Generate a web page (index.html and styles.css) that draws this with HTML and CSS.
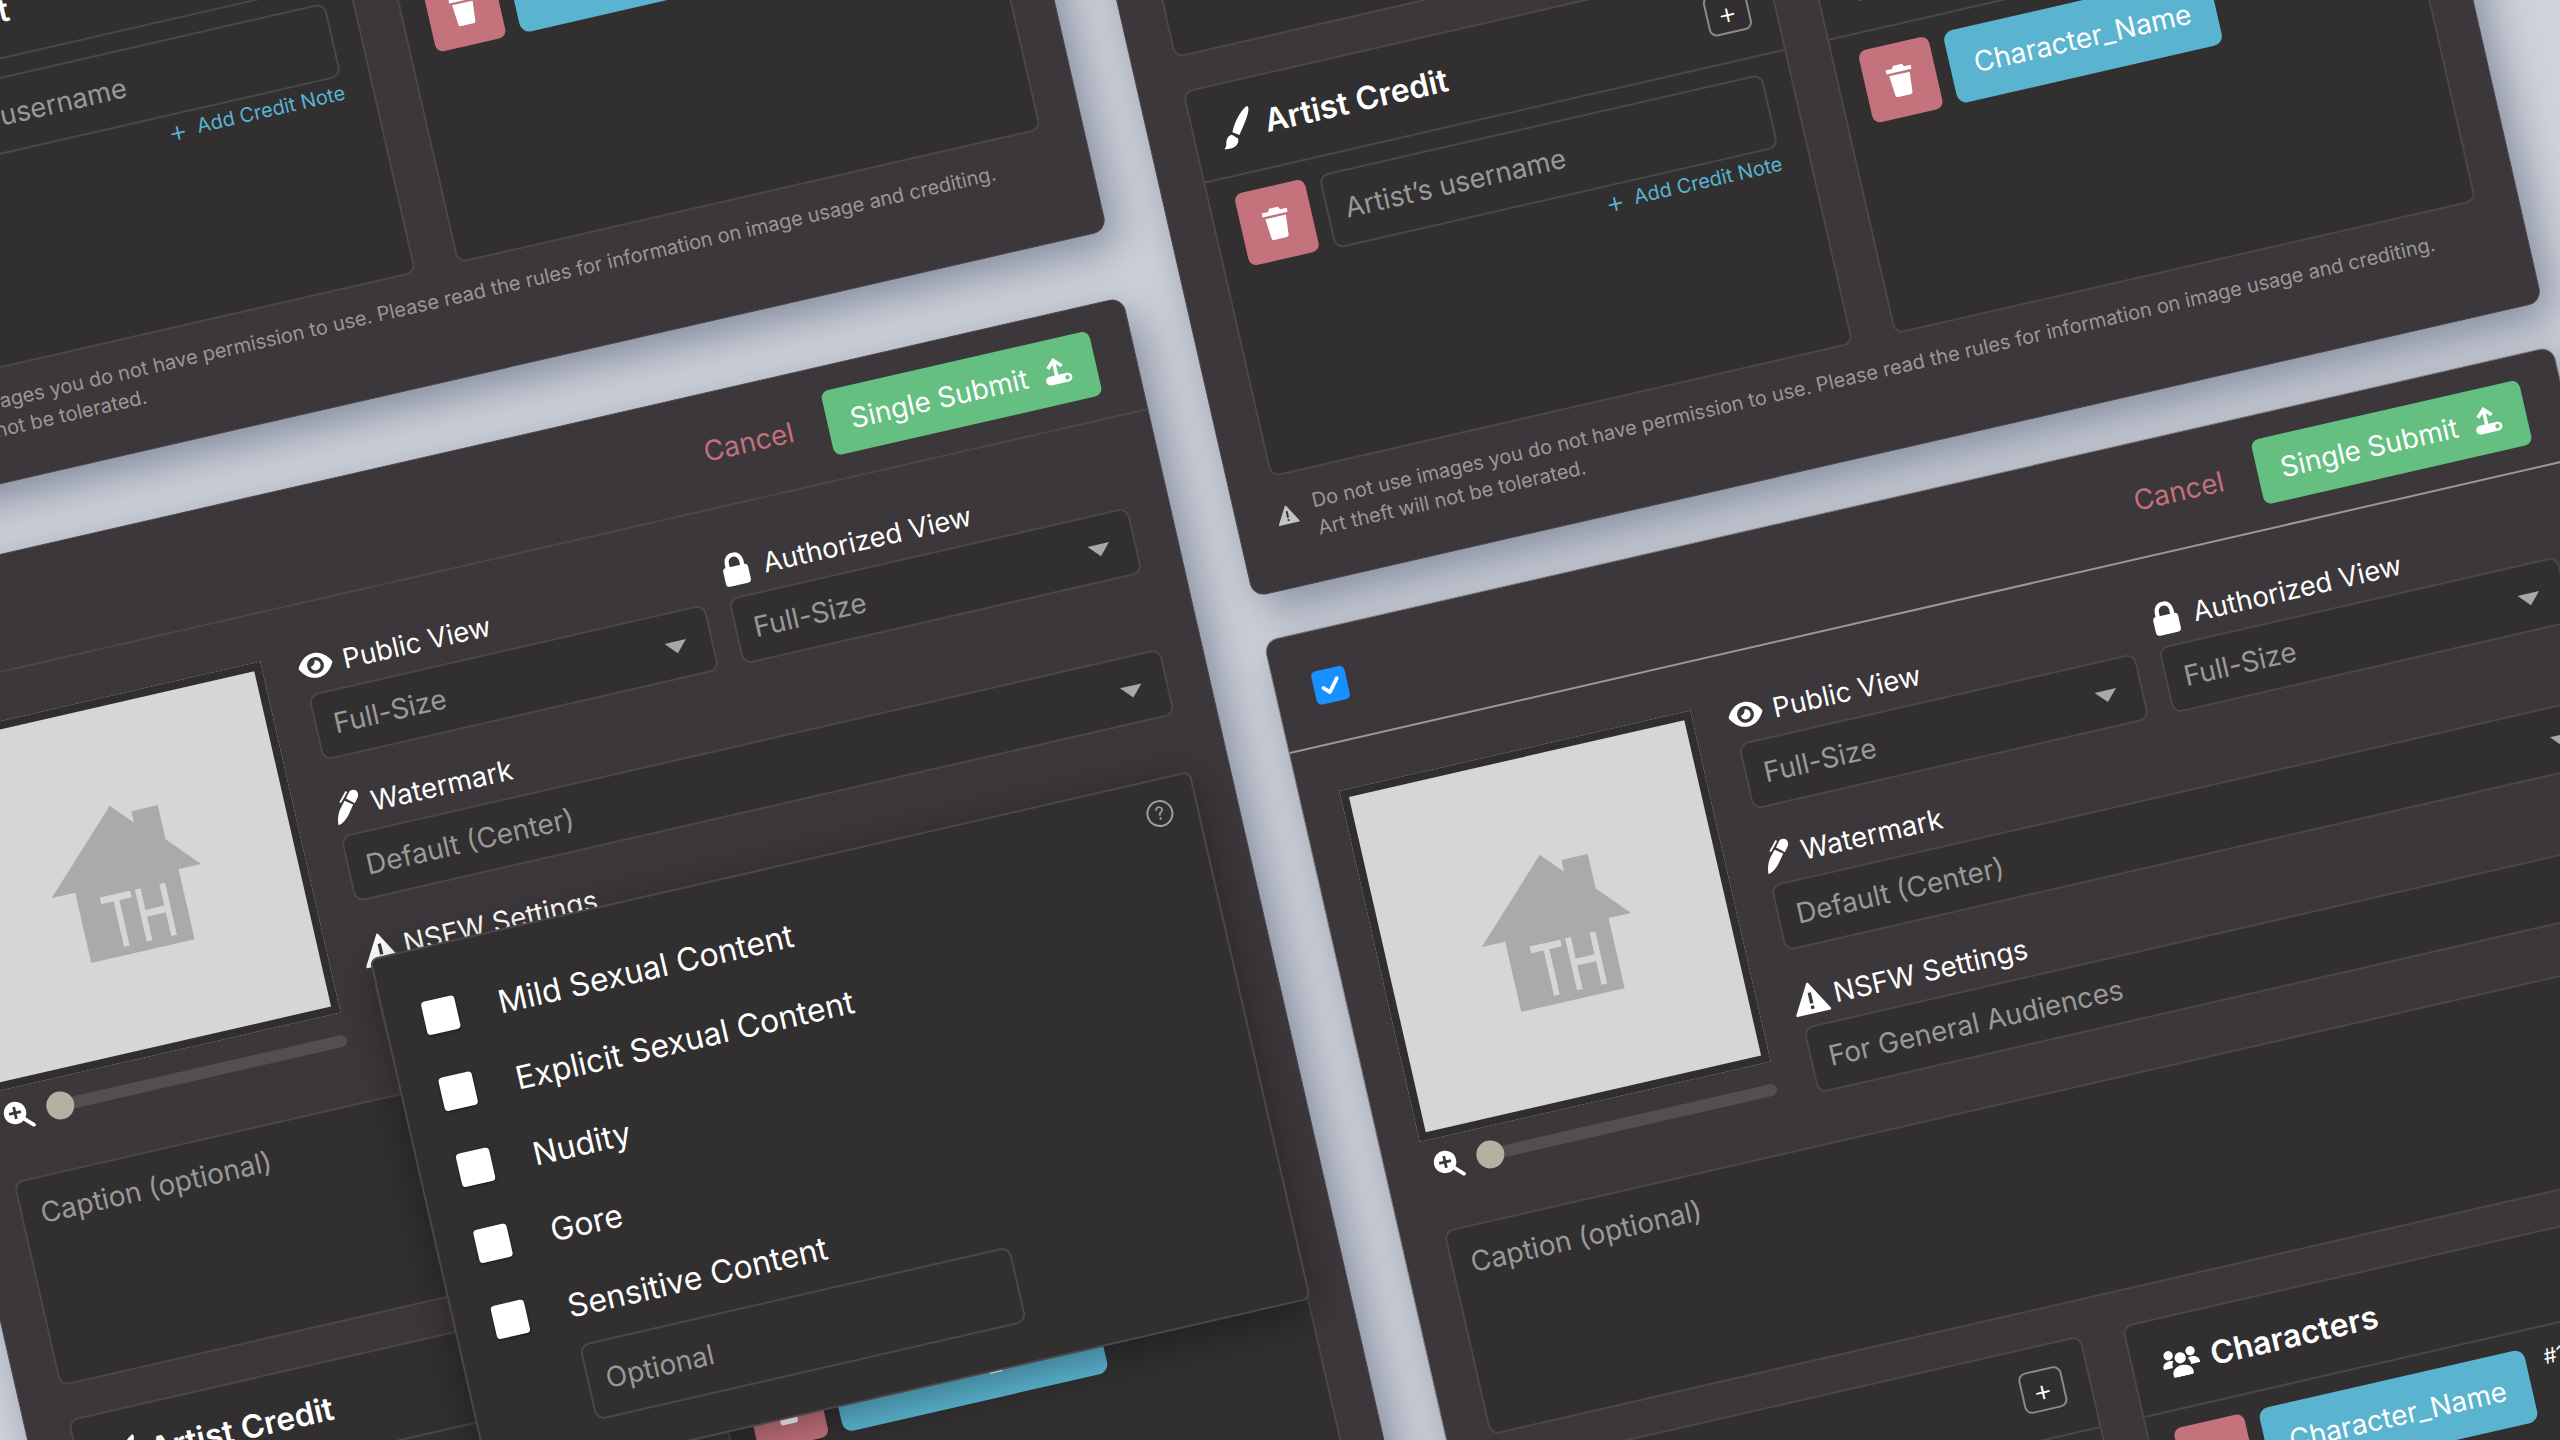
FILE: index.html
```html
<!DOCTYPE html>
<html lang="en">
<head>
<meta charset="utf-8">
<title>Submit</title>
<link rel="stylesheet" href="styles.css">
</head>
<body>
<svg class="defs" aria-hidden="true">
  <symbol id="i-eye" viewBox="0 0 32 24"><path fill="#fff" d="M16 1C8 1 3 7 .5 12 3 17 8 23 16 23s13-6 15.500-11C29 7 24 1 16 1z"/><circle cx="16" cy="12" r="7.500" fill="#3b373a"/><path fill="#fff" d="M16 7.500a4.500 4.500 0 1 1-4.500 4.500c2 .8 4.500-2 4.500-4.500z"/></symbol>
  <symbol id="i-lock" viewBox="0 0 28 32"><path fill="none" stroke="#fff" stroke-width="4" d="M7 15V9a7 7 0 0 1 14 0v6"/><rect x="2" y="13" width="24" height="18" rx="3.500" fill="#fff"/></symbol>
  <symbol id="i-pen" viewBox="0 0 32 36"><path fill="#fff" d="M2 35c0-5 2-12 6-17l6-7 8 6-6 8c-4 5-9 9-14 10z"/><path fill="#fff" d="M16 9l4-5c2-3 6-3 8-1s2 6 0 8l-4 5z"/><path fill="none" stroke="#fff" stroke-width="2" d="M18 2 9 12"/></symbol>
  <symbol id="i-warn" viewBox="0 0 32 30"><path fill="#fff" stroke="#fff" stroke-width="2" stroke-linejoin="round" d="M16 2 31 28H1z"/><rect x="14.500" y="10" width="3" height="10" fill="#3b373a"/><rect x="14.500" y="22" width="3" height="3" fill="#3b373a"/></symbol>
  <symbol id="i-zoom" viewBox="0 0 32 32"><circle cx="13" cy="13" r="12" fill="#fff"/><path stroke="#3b373a" stroke-width="3" d="M13 6.500v13M6.500 13h13"/><path stroke="#fff" stroke-width="4" stroke-linecap="round" d="M21 21l9 9"/></symbol>
  <symbol id="i-trash" viewBox="0 0 24 28"><path fill="#fff" d="M8 1h8l1.200 2.500H23V7H1V3.500h5.800zM3 9h18l-1.500 17a2 2 0 0 1-2 2h-11a2 2 0 0 1-2-2z"/></symbol>
  <symbol id="i-brush" viewBox="0 0 32 38"><path fill="#fff" d="M29 1c-6 3-14 12-18 21l6 4C22 19 30 9 31 3c0-2-1-3-2-2zM10 24c-4 0-6 3-7 7-.5 3-2 4-3 5 7 2 15 0 15-7z"/></symbol>
  <symbol id="i-users" viewBox="0 0 40 32"><circle cx="8" cy="7" r="5" fill="#fff"/><circle cx="32" cy="7" r="5" fill="#fff"/><circle cx="20" cy="12" r="6" fill="#fff"/><path fill="#fff" d="M0 20c0-5 4-7 8-7 2 0 3 .5 4 1-1.500 2-2 4-2 7H1a1 1 0 0 1-1-1zM40 20c0-5-4-7-8-7-2 0-3 .5-4 1 1.500 2 2 4 2 7h9a1 1 0 0 0 1-1zM9 29c0-6 5-9 11-9s11 3 11 9c0 2-1 3-3 3H12c-2 0-3-1-3-3z"/></symbol>
  <symbol id="i-upload" viewBox="0 0 36 36"><path fill="none" stroke="#fff" stroke-width="4" d="M17 24V6M9 13l8-8 8 8"/><rect x="4" y="22" width="30" height="10" rx="5" fill="#fff"/><circle cx="28.500" cy="27" r="2.500" fill="#64bf80"/></symbol>
  <symbol id="i-check" viewBox="0 0 24 24"><path fill="none" stroke="#fff" stroke-width="3.500" stroke-linecap="round" stroke-linejoin="round" d="M5 13l5 5 9-11"/></symbol>
</svg>

<main class="stage">
  <div class="desk">
    <section class="col col-left">
      <article class="card card-shift">
        <header class="card-head"><span class="checkbox"></span><span class="cancel">Cancel</span><button class="submit">Single Submit <svg class="ic-upload"><use href="#i-upload"/></svg></button></header>
        <div class="card-body">
          <div class="top">
            <div class="media"><div class="thumb"><svg class="house" viewBox="0 0 344 344"><path class="house-shape" d="M173 99l20 22V109l27 0v35l29 32h-23v72H120v-72H96z"/><text class="house-text" x="142" y="239" textLength="72" lengthAdjust="spacingAndGlyphs">TH</text></svg></div><div class="slider"><svg class="ic-zoom"><use href="#i-zoom"/></svg><span class="knob"></span><span class="track"></span></div></div>
            <div class="fields">
              <div class="field"><div class="label"><svg class="ic"><use href="#i-eye"/></svg>Public View</div><div class="select">Full-Size<i class="caret"></i></div></div>
              <div class="field"><div class="label"><svg class="ic"><use href="#i-lock"/></svg>Authorized View</div><div class="select">Full-Size<i class="caret"></i></div></div>
              <div class="field full"><div class="label"><svg class="ic"><use href="#i-pen"/></svg>Watermark</div><div class="select">Default (Center)<i class="caret"></i></div></div>
              <div class="field full"><div class="label"><svg class="ic"><use href="#i-warn"/></svg>NSFW Settings</div><div class="select">For General Audiences</div></div>
            </div>
          </div>
          <div class="caption">Caption (optional)</div>
          <div class="subs">
            <div class="sub"><div class="sub-head"><svg class="ic-brush"><use href="#i-brush"/></svg><span class="sub-title">Artist Credit</span><span class="plus">+</span></div><div class="sub-row"><span class="del"><svg class="ic-trash"><use href="#i-trash"/></svg></span><div class="credit"><div class="input">Artist’s username</div><div class="note"><span class="note-plus">+</span>Add Credit Note</div></div></div></div>
            <div class="sub"><div class="sub-head"><svg class="ic-users"><use href="#i-users"/></svg><span class="sub-title">Characters</span></div><div class="sub-row"><span class="del"><svg class="ic-trash"><use href="#i-trash"/></svg></span><span class="chip">Character_Name</span><span class="tag">#162</span></div></div>
          </div>
          <div class="warning"><svg class="ic-warn"><use href="#i-warn"/></svg><p>Do not use images you do not have permission to use. Please read the rules for information on image usage and crediting.<br>Art theft will not be tolerated.</p></div>
        </div>
      </article>

      <article class="card">
        <header class="card-head"><span class="checkbox"></span><span class="cancel">Cancel</span><button class="submit">Single Submit <svg class="ic-upload"><use href="#i-upload"/></svg></button></header>
        <div class="card-body">
          <div class="top">
            <div class="media"><div class="thumb"><svg class="house" viewBox="0 0 344 344"><path class="house-shape" d="M173 99l20 22V109l27 0v35l29 32h-23v72H120v-72H96z"/><text class="house-text" x="142" y="239" textLength="72" lengthAdjust="spacingAndGlyphs">TH</text></svg></div><div class="slider"><svg class="ic-zoom"><use href="#i-zoom"/></svg><span class="knob"></span><span class="track"></span></div></div>
            <div class="fields">
              <div class="field"><div class="label"><svg class="ic"><use href="#i-eye"/></svg>Public View</div><div class="select">Full-Size<i class="caret"></i></div></div>
              <div class="field"><div class="label"><svg class="ic"><use href="#i-lock"/></svg>Authorized View</div><div class="select">Full-Size<i class="caret"></i></div></div>
              <div class="field full"><div class="label"><svg class="ic"><use href="#i-pen"/></svg>Watermark</div><div class="select">Default (Center)<i class="caret"></i></div></div>
              <div class="field full"><div class="label"><svg class="ic"><use href="#i-warn"/></svg>NSFW Settings</div><div class="select">For General Audiences</div></div>
            </div>
          </div>
          <div class="caption">Caption (optional)</div>
          <div class="subs">
            <div class="sub"><div class="sub-head"><svg class="ic-brush"><use href="#i-brush"/></svg><span class="sub-title">Artist Credit</span><span class="plus">+</span></div><div class="sub-row"><span class="del"><svg class="ic-trash"><use href="#i-trash"/></svg></span><div class="credit"><div class="input">Artist’s username</div><div class="note"><span class="note-plus">+</span>Add Credit Note</div></div></div></div>
            <div class="sub"><div class="sub-head"><svg class="ic-users"><use href="#i-users"/></svg><span class="sub-title">Characters</span></div><div class="sub-row"><span class="del"><svg class="ic-trash"><use href="#i-trash"/></svg></span><span class="chip">Character_Name</span><span class="tag">#162</span></div></div>
          </div>
        </div>
        <div class="popup">
          <svg class="help" viewBox="0 0 28 28"><circle cx="14" cy="14" r="12.500"/><text x="14" y="20">?</text></svg>
          <label class="opt"><span class="box"></span>Mild Sexual Content</label>
          <label class="opt"><span class="box"></span>Explicit Sexual Content</label>
          <label class="opt"><span class="box"></span>Nudity</label>
          <label class="opt"><span class="box"></span>Gore</label>
          <label class="opt"><span class="box"></span>Sensitive Content</label>
          <div class="input popup-input">Optional</div>
        </div>
      </article>
    </section>

    <section class="col col-right">
      <article class="card">
        <header class="card-head"><span class="checkbox"></span><span class="cancel">Cancel</span><button class="submit">Single Submit <svg class="ic-upload"><use href="#i-upload"/></svg></button></header>
        <div class="card-body">
          <div class="top">
            <div class="media"><div class="thumb"><svg class="house" viewBox="0 0 344 344"><path class="house-shape" d="M173 99l20 22V109l27 0v35l29 32h-23v72H120v-72H96z"/><text class="house-text" x="142" y="239" textLength="72" lengthAdjust="spacingAndGlyphs">TH</text></svg></div><div class="slider"><svg class="ic-zoom"><use href="#i-zoom"/></svg><span class="knob"></span><span class="track"></span></div></div>
            <div class="fields">
              <div class="field"><div class="label"><svg class="ic"><use href="#i-eye"/></svg>Public View</div><div class="select">Full-Size<i class="caret"></i></div></div>
              <div class="field"><div class="label"><svg class="ic"><use href="#i-lock"/></svg>Authorized View</div><div class="select">Full-Size<i class="caret"></i></div></div>
              <div class="field full"><div class="label"><svg class="ic"><use href="#i-pen"/></svg>Watermark</div><div class="select">Default (Center)<i class="caret"></i></div></div>
              <div class="field full"><div class="label"><svg class="ic"><use href="#i-warn"/></svg>NSFW Settings</div><div class="select">For General Audiences</div></div>
            </div>
          </div>
          <div class="caption">Caption (optional)</div>
          <div class="subs">
            <div class="sub"><div class="sub-head"><svg class="ic-brush"><use href="#i-brush"/></svg><span class="sub-title">Artist Credit</span><span class="plus">+</span></div><div class="sub-row"><span class="del"><svg class="ic-trash"><use href="#i-trash"/></svg></span><div class="credit"><div class="input">Artist’s username</div><div class="note"><span class="note-plus">+</span>Add Credit Note</div></div></div></div>
            <div class="sub"><div class="sub-head"><svg class="ic-users"><use href="#i-users"/></svg><span class="sub-title">Characters</span></div><div class="sub-row"><span class="del"><svg class="ic-trash"><use href="#i-trash"/></svg></span><span class="chip">Character_Name</span><span class="tag">#162</span></div></div>
          </div>
          <div class="warning"><svg class="ic-warn"><use href="#i-warn"/></svg><p>Do not use images you do not have permission to use. Please read the rules for information on image usage and crediting.<br>Art theft will not be tolerated.</p></div>
        </div>
      </article>

      <article class="card card-selected">
        <header class="card-head"><span class="checkbox checked"><svg class="ic-check"><use href="#i-check"/></svg></span><span class="cancel">Cancel</span><button class="submit">Single Submit <svg class="ic-upload"><use href="#i-upload"/></svg></button></header>
        <div class="card-body">
          <div class="top">
            <div class="media"><div class="thumb"><svg class="house" viewBox="0 0 344 344"><path class="house-shape" d="M173 99l20 22V109l27 0v35l29 32h-23v72H120v-72H96z"/><text class="house-text" x="142" y="239" textLength="72" lengthAdjust="spacingAndGlyphs">TH</text></svg></div><div class="slider"><svg class="ic-zoom"><use href="#i-zoom"/></svg><span class="knob"></span><span class="track"></span></div></div>
            <div class="fields">
              <div class="field"><div class="label"><svg class="ic"><use href="#i-eye"/></svg>Public View</div><div class="select">Full-Size<i class="caret"></i></div></div>
              <div class="field"><div class="label"><svg class="ic"><use href="#i-lock"/></svg>Authorized View</div><div class="select">Full-Size<i class="caret"></i></div></div>
              <div class="field full"><div class="label"><svg class="ic"><use href="#i-pen"/></svg>Watermark</div><div class="select">Default (Center)<i class="caret"></i></div></div>
              <div class="field full"><div class="label"><svg class="ic"><use href="#i-warn"/></svg>NSFW Settings</div><div class="select">For General Audiences</div></div>
            </div>
          </div>
          <div class="caption">Caption (optional)</div>
          <div class="subs">
            <div class="sub"><div class="sub-head"><svg class="ic-brush"><use href="#i-brush"/></svg><span class="sub-title">Artist Credit</span><span class="plus">+</span></div><div class="sub-row"><span class="del"><svg class="ic-trash"><use href="#i-trash"/></svg></span><div class="credit"><div class="input">Artist’s username</div><div class="note"><span class="note-plus">+</span>Add Credit Note</div></div></div></div>
            <div class="sub"><div class="sub-head"><svg class="ic-users"><use href="#i-users"/></svg><span class="sub-title">Characters</span></div><div class="sub-row"><span class="del"><svg class="ic-trash"><use href="#i-trash"/></svg></span><span class="chip">Character_Name</span><span class="tag">#162</span></div></div>
          </div>
        </div>
      </article>
    </section>
  </div>
</main>
</body>
</html>
```

FILE: styles.css
```css
* { box-sizing: border-box; }
html, body { margin: 0; height: 100%; }
body {
  width: 2560px;
  height: 1440px;
  overflow: hidden;
  background: #cfd3da;
  font-family: "Inter", "Liberation Sans", sans-serif;
  color: #f5f5f5;
}
.defs { width: 0; height: 0; position: absolute; }

.stage {
  width: 3000px;
  transform: rotate(-12.9deg);
  transform-origin: 0 0;
}
.desk { display: flex; align-items: flex-start; }
.col { flex: none; width: 1323px; display: flex; flex-direction: column; }
.col-left { margin-top: -896px; margin-left: -295px; gap: 68px; }
.col-right { margin-top: -506px; margin-left: 60px; gap: 45px; }
.card-shift { margin-left: -4px; }

.card {
  position: relative;
  background: #3b373a;
  border-radius: 14px;
  border: 1px solid #4b4749;
  box-shadow: 10px 16px 44px rgba(70, 80, 110, .55);
}
.card-selected { border-color: #7d7a79; }
.card-selected .card-head { border-bottom-color: #9a9897; }

.card-head {
  height: 115px;
  padding: 0 40px 0 38px;
  display: flex;
  align-items: center;
  gap: 35px;
  border-bottom: 2px solid #4b4749;
}
.checkbox {
  width: 34px;
  height: 34px;
  border-radius: 5px;
  background: #fff;
  margin-right: auto;
  display: flex;
  align-items: center;
  justify-content: center;
}
.checked { background: #1890ff; }
.ic-check { width: 26px; height: 26px; }
.cancel { font-size: 28px; color: #c4707b; }
.submit {
  width: 275px;
  height: 66px;
  border: 0;
  border-radius: 8px;
  background: #64bf80;
  color: #fff;
  font: inherit;
  font-size: 28px;
  display: flex;
  align-items: center;
  justify-content: center;
  gap: 14px;
}
.ic-upload { width: 32px; height: 32px; }

.card-body { padding: 43px 41px 38px 43px; }
.top { display: flex; gap: 39px; }
.media { width: 357px; flex: none; }
.thumb {
  width: 360px;
  height: 360px;
  margin: 4px 0 0 -3px;
  border: 8px solid #302e2f;
  background: #d6d6d6;
}
.house { display: block; width: 344px; height: 344px; }
.house-shape { fill: #aaaaa8; }
.house-text { font-family: "Liberation Sans", sans-serif; font-size: 76px; fill: #d6d6d6; stroke: #d6d6d6; stroke-width: 1; }
.slider { margin-top: 14px; display: flex; align-items: center; height: 28px; padding-left: 5px; }
.ic-zoom { width: 30px; height: 30px; flex: none; margin-right: 14px; }
.knob { flex: none; width: 28px; height: 28px; border-radius: 50%; background: #b5b1a2; position: relative; z-index: 1; }
.track { flex: 1; height: 12px; margin-left: -14px; background: #544f4f; border-radius: 6px; }

.fields { flex: 1; display: grid; grid-template-columns: 407px 1fr; gap: 30px 24px; }
.full { grid-column: 1 / -1; }
.label { height: 40px; margin-bottom: 7px; display: flex; align-items: center; gap: 10px; font-size: 27.5px; color: #fff; }
.full .label { gap: 6px; font-size: 28px; }
.ic { width: 36px; height: 34px; flex: none; margin-left: -4px; }
.select, .input, .caption {
  background: #312f30;
  border: 2px solid #4b4749;
  border-radius: 10px;
  color: #9a9999;
  font-size: 28px;
}
.select { position: relative; height: 68px; padding: 0 17px; display: flex; align-items: center; }
.caret {
  position: absolute;
  right: 24px;
  top: 28px;
  border-top: 12px solid #a8a8a8;
  border-left: 11px solid transparent;
  border-right: 11px solid transparent;
}
.caption { height: 210px; margin-top: 50px; padding: 18px; }

.subs { display: grid; grid-template-columns: 1fr 1fr; gap: 42px; margin-top: 34px; }
.sub { height: 396px; background: #312f30; border: 2px solid #4b4749; border-radius: 10px; }
.sub-head { height: 93px; padding: 0 29px; display: flex; align-items: center; gap: 12px; border-bottom: 2px solid #4b4749; }
.sub-title { font-size: 32px; font-weight: 600; color: #fff; }
.ic-brush { width: 34px; height: 40px; flex: none; margin-left: -3px; }
.ic-users { width: 38px; height: 30px; flex: none; }
.plus {
  margin: -6px -4px 0 auto;
  width: 44px;
  height: 42px;
  border: 2px solid #8b8b8b;
  border-radius: 8px;
  display: flex;
  align-items: center;
  justify-content: center;
  font-size: 30px;
  font-weight: 300;
  color: #fff;
}
.sub-row { padding: 17px 27px 0 25px; display: flex; align-items: flex-start; gap: 15px; }
.del { flex: none; width: 72px; height: 74px; background: #c4727c; border-radius: 8px; display: flex; align-items: center; justify-content: center; }
.ic-trash { width: 28px; height: 36px; }
.credit { flex: 1; }
.input { height: 76px; padding: 0 17px; display: flex; align-items: center; font-size: 27.5px; }
.note { margin-top: 1px; display: flex; justify-content: flex-end; align-items: center; gap: 10px; font-size: 20px; color: #58b4d1; }
.note-plus { font-size: 30px; font-weight: 300; line-height: 1; }
.chip { flex: none; width: 272px; height: 74px; background: #5ab4d0; border-radius: 10px; color: #fff; font-size: 28px; display: flex; align-items: center; justify-content: center; }
.tag { font-size: 21px; color: #fff; margin-left: 4px; }

.warning { margin-top: 18px; display: flex; gap: 16px; font-size: 20px; line-height: 28px; color: #9a9797; }
.warning p { margin: 0; }
.ic-warn { width: 22px; height: 20px; flex: none; margin: 12px 0 0 -3px; opacity: .7; }

.popup {
  position: absolute;
  top: 476px;
  left: 440px;
  width: 842px;
  height: 542px;
  padding: 30px 0 0 38px;
  background: #312f30;
  border: 2px solid #4b4749;
  border-radius: 8px;
  box-shadow: 0 10px 40px rgba(0, 0, 0, .35);
}
.help { position: absolute; top: 19px; right: 23px; width: 28px; height: 28px; }
.help circle { fill: none; stroke: #a0a0a0; stroke-width: 2; }
.help text { fill: #a0a0a0; font-size: 18px; text-anchor: middle; }
.opt { height: 78px; display: flex; align-items: center; gap: 42px; font-size: 32px; color: #fff; }
.box { width: 34px; height: 34px; background: #fff; border-radius: 4px; box-shadow: 0 1px 3px rgba(0, 0, 0, .5); }
.popup-input { position: absolute; left: 116px; top: 421px; width: 442px; height: 78px; font-size: 28px; }
```
